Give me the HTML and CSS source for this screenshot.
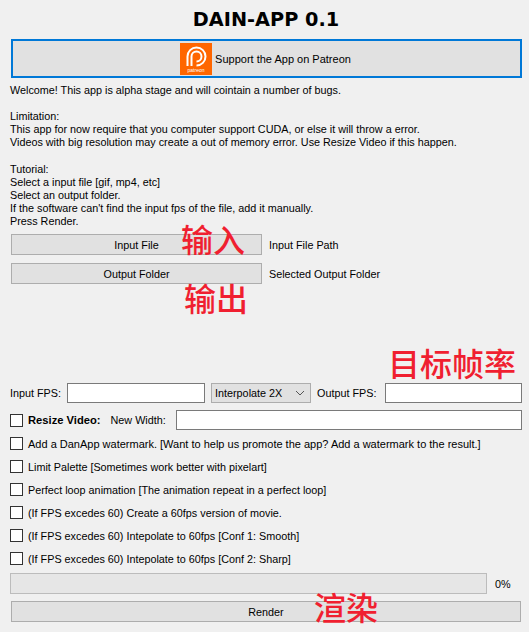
FILE: index.html
```html
<!doctype html>
<html lang="en">

<head>
    <meta charset="UTF-8">
    <title>DAIN-APP 0.1</title>
    <link rel="stylesheet" href="styles.css">
</head>

<body>
    <div class="wrapper">
        <h1>DAIN-APP 0.1</h1>
        <button class="patreon">
            <svg class="logo" width="32" height="32" viewBox="0 0 32 32">
                <rect width="32" height="32" fill="#ff6600" />
                <path d="M7.500 23V13.500a9 9 0 1 1 9 9" fill="none" stroke="#fff" stroke-width="2" />
                <path d="M11.500 23V13.500a5 5 0 1 1 5 5" fill="none" stroke="#fff" stroke-width="2" />
                <text x="16" y="29" class="logoText">patreon</text>
            </svg>
            <span>Support the App on Patreon</span>
        </button>

        <div class="info">
            <p>Welcome! This app is alpha stage and will cointain a number of bugs.</p>
            <p>Limitation:<br>
                This app for now require that you computer support CUDA, or else it will throw a error.<br>
                Videos with big resolution may create a out of memory error. Use Resize Video if this happen.</p>
            <p>Tutorial:<br>
                Select a input file [gif, mp4, etc]<br>
                Select an output folder.<br>
                If the software can't find the input fps of the file, add it manually.<br>
                Press Render.</p>
        </div>

        <div class="fileRow">
            <button class="button fileButton">Input File</button>
            <span>Input File Path</span>
        </div>
        <div class="fileRow">
            <button class="button fileButton">Output Folder</button>
            <span>Selected Output Folder</span>
        </div>

        <div class="fpsRow">
            <label>Input FPS:</label>
            <input class="field inputFps" type="text">
            <div class="combo">
                <span>Interpolate 2X</span>
                <svg width="10" height="6" viewBox="0 0 10 6">
                    <path d="M1 1l4 4 4-4" fill="none" stroke="#555" />
                </svg>
            </div>
            <label>Output FPS:</label>
            <input class="field outputFps" type="text">
        </div>

        <div class="resizeRow">
            <span class="box"></span>
            <b>Resize Video:</b>
            <label class="newWidth">New Width:</label>
            <input class="field widthField" type="text">
        </div>

        <div class="checkRow watermark"><span class="box"></span>Add a DanApp watermark. [Want to help us promote the app? Add a watermark to the result.]</div>
        <div class="checkRow"><span class="box"></span>Limit Palette [Sometimes work better with pixelart]</div>
        <div class="checkRow"><span class="box"></span>Perfect loop animation [The animation repeat in a perfect loop]</div>
        <div class="checkRow"><span class="box"></span>(If FPS excedes 60) Create a 60fps version of movie.</div>
        <div class="checkRow"><span class="box"></span>(If FPS excedes 60) Intepolate to 60fps [Conf 1: Smooth]</div>
        <div class="checkRow"><span class="box"></span>(If FPS excedes 60) Intepolate to 60fps [Conf 2: Sharp]</div>

        <div class="progressRow">
            <div class="progress"></div>
            <span>0%</span>
        </div>
        <button class="button render">Render</button>
    </div>

    <span class="note noteInput">输入</span>
    <span class="note noteOutput">输出</span>
    <span class="note noteTarget">目标帧率</span>
    <span class="note noteRender">渲染</span>
</body>

</html>
```

FILE: styles.css
```css
* {
    margin: 0;
    padding: 0;
    box-sizing: border-box;
}

html,
body {
    height: 632px;
    overflow: hidden;
}

body {
    position: relative;
    background-color: #f0f0f0;
    color: #000;
    font-family: 'Liberation Sans', Arial, sans-serif;
    font-size: 10.8px;
    white-space: nowrap;
}

.wrapper {
    padding: 8px 7px 0 10px;
}

h1 {
    font-family: 'DejaVu Sans', sans-serif;
    font-size: 19.3px;
    line-height: 24px;
    text-align: center;
}

button {
    font: inherit;
    color: #000;
}

.patreon {
    display: flex;
    align-items: center;
    justify-content: center;
    gap: 3px;
    width: 511px;
    height: 39px;
    margin: 7px 0 0 1px;
    padding-right: 2px;
    border: 2px solid #0078d7;
    background-color: #e1e1e1;
    font-size: 11px;
}

.logoText {
    fill: #fff;
    font-size: 5px;
    text-anchor: middle;
}

.info {
    height: 150px;
    margin-top: 6px;
    line-height: 13.1px;
}

.info p {
    margin-bottom: 13.1px;
}

.button {
    height: 21px;
    border: 1px solid #adadad;
    background-color: #e1e1e1;
}

.fileRow {
    display: flex;
    align-items: center;
    gap: 7px;
    margin: 0 0 8px 1px;
}

.fileButton {
    width: 251px;
}

.fpsRow {
    display: flex;
    align-items: center;
    height: 20px;
    margin-top: 99px;
}

.field {
    height: 20px;
    border: 1px solid #7a7a7a;
    background-color: #fff;
}

.inputFps {
    width: 138px;
    margin-left: 6px;
}

.combo {
    display: flex;
    align-items: center;
    justify-content: space-between;
    width: 100px;
    height: 20px;
    margin: 0 6px;
    padding: 0 5px 0 3px;
    border: 1px solid #adadad;
    background-color: #e1e1e1;
}

.outputFps {
    width: 137px;
    margin-left: auto;
}

.resizeRow {
    display: flex;
    align-items: center;
    height: 20px;
    margin-top: 7px;
}

.resizeRow b {
    margin-left: 5px;
    font-size: 11.2px;
}

.newWidth {
    margin-left: 10px;
}

.widthField {
    width: 346px;
    margin-left: auto;
}

.box {
    flex: none;
    width: 13px;
    height: 13px;
    border: 1px solid #333;
    background-color: #fff;
}

.checkRow {
    display: flex;
    align-items: center;
    gap: 5px;
    height: 23px;
}

.resizeRow + .checkRow {
    margin-top: 2px;
}

.watermark {
    font-size: 11px;
}

.progressRow {
    display: flex;
    align-items: center;
    gap: 8px;
    margin-top: 3px;
}

.progress {
    width: 477px;
    height: 21px;
    border: 1px solid #bcbcbc;
    background-color: #e6e6e6;
}

.render {
    display: block;
    width: 510px;
    margin: 7px 0 0 1px;
}

/* red notes drawn over the window */
.note {
    position: absolute;
    color: #f01f30;
    font-family: 'Noto Sans CJK SC', sans-serif;
    font-size: 32px;
    font-weight: 500;
    line-height: 32px;
}

.noteInput {
    left: 181px;
    top: 222px;
}

.noteOutput {
    left: 184px;
    top: 281px;
}

.noteTarget {
    left: 388px;
    top: 346px;
}

.noteRender {
    left: 314px;
    top: 590px;
}
```
